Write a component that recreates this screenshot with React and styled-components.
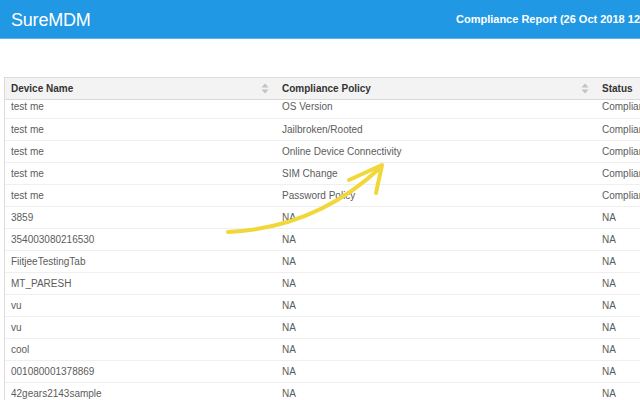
import React from 'react'
import styled, { createGlobalStyle } from 'styled-components'

const GlobalStyle = createGlobalStyle`
    html, body {
        margin: 0;
        padding: 0;
        background: #ffffff;
        overflow: hidden;
    }
    body {
        font-family: "Liberation Sans", Arial, Helvetica, sans-serif;
    }
`;

const PageStyled = styled.div`
    position: relative;
    width: 640px;
    height: 400px;
    overflow: hidden;
`;

const HeaderStyled = styled.div`
    height: 38px;
    background: #2198e4;
    border-bottom: 1px solid #62b3ec;
    display: flex;
    align-items: center;
    padding-left: 11px;
    white-space: nowrap;
    .logo {
        flex: 0 0 445px;
        color: #ffffff;
        font-size: 18px;
        letter-spacing: -0.2px;
        line-height: 20px;
        margin-top: 1px;
    }
    .title {
        flex-shrink: 0;
        color: #ffffff;
        font-size: 11px;
        font-weight: bold;
    }
`;

const TableStyled = styled.div`
    margin: 38px 0 0 4px;
    width: 720px;
    border-left: 1px solid #dcdcdc;
    border-top: 1px solid #dcdcdc;
`;

const RowStyled = styled.div`
    display: grid;
    grid-template-columns: 270px 320px 1fr;
    height: 22px;
    align-items: center;
    border-bottom: 1px solid #efefef;
    box-sizing: border-box;
    font-size: 10px;
    color: #5c5c5c;
`;

const HeadRowStyled = styled(RowStyled)`
    height: 22px;
    background: #f3f3f3;
    border-bottom: 1px solid #d9d9d9;
    font-weight: bold;
    color: #333333;
`;

const CellStyled = styled.div`
    display: flex;
    align-items: center;
    justify-content: space-between;
    padding: 0 6px 0 ${({first}) => (first ? '6px' : '7px')};
    white-space: nowrap;
    overflow: hidden;
`;

const BodyStyled = styled.div`
    ${RowStyled}:first-child {
        height: 19px;
        align-items: start;
        padding-top: 1px;
    }
`;

const ArrowStyled = styled.svg`
    position: absolute;
    left: 0;
    top: 0;
    pointer-events: none;
`;

const SortIcon = () => (
    <svg width="8" height="11" viewBox="0 0 8 11">
        <path d="M4 0.5 L7.5 4.5 L0.5 4.5 Z" fill="#c2c2c2" />
        <path d="M4 10.5 L7.5 6.5 L0.5 6.5 Z" fill="#c2c2c2" />
    </svg>
);

const rows = [
    ['test me', 'OS Version', 'Compliant'],
    ['test me', 'Jailbroken/Rooted', 'Compliant'],
    ['test me', 'Online Device Connectivity', 'Compliant'],
    ['test me', 'SIM Change', 'Compliant'],
    ['test me', 'Password Policy', 'Compliant'],
    ['3859', 'NA', 'NA'],
    ['354003080216530', 'NA', 'NA'],
    ['FiitjeeTestingTab', 'NA', 'NA'],
    ['MT_PARESH', 'NA', 'NA'],
    ['vu', 'NA', 'NA'],
    ['vu', 'NA', 'NA'],
    ['cool', 'NA', 'NA'],
    ['001080001378869', 'NA', 'NA'],
    ['42gears2143sample', 'NA', 'NA'],
    ['sample', 'NA', 'NA'],
];

const App = () => {
    return (
        <PageStyled>
            <GlobalStyle />
            <HeaderStyled>
                <div className="logo">SureMDM</div>
                <div className="title">Compliance Report (26 Oct 2018 12:00:00 PM)</div>
            </HeaderStyled>
            <TableStyled>
                <HeadRowStyled>
                    <CellStyled first>Device Name<SortIcon /></CellStyled>
                    <CellStyled>Compliance Policy<SortIcon /></CellStyled>
                    <CellStyled>Status</CellStyled>
                </HeadRowStyled>
                <BodyStyled>
                    {rows.map((r, i) => (
                        <RowStyled key={i}>
                            <CellStyled first>{r[0]}</CellStyled>
                            <CellStyled>{r[1]}</CellStyled>
                            <CellStyled>{r[2]}</CellStyled>
                        </RowStyled>
                    ))}
                </BodyStyled>
            </TableStyled>
            <ArrowStyled width="640" height="400" viewBox="0 0 640 400">
                <path d="M228 232 Q 316 228 381 167" fill="none" stroke="#f1d73a" strokeWidth="4" strokeLinecap="round" />
                <path d="M349 180 L382 165 L376 193" fill="none" stroke="#f1d73a" strokeWidth="4" strokeLinecap="round" strokeLinejoin="round" />
            </ArrowStyled>
        </PageStyled>
    )
}

export default App
